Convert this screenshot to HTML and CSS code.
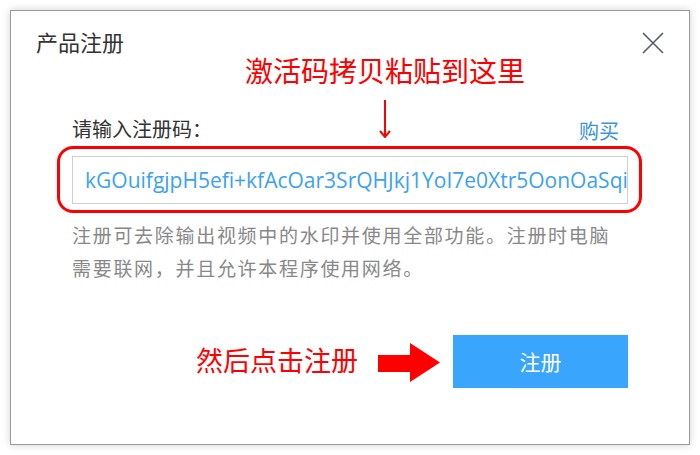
FILE: index.html
```html
<!DOCTYPE html>
<html lang="zh-CN">
<head>
  <meta charset="UTF-8">
  <title>产品注册</title>
  <link rel="stylesheet" href="styles.css">
</head>
<body>
  <div class="dialog">
    <div class="dialog-head">
      <div class="dialog-title">产品注册</div>
      <svg class="close" width="22" height="22" viewBox="0 0 22 22">
        <path d="M1 1 L21 21 M21 1 L1 21" stroke="#555b66" stroke-width="1.6" fill="none"/>
      </svg>
    </div>

    <div class="form">
      <div class="label-row">
        <span class="label">请输入注册码：</span>
        <a class="buy">购买</a>
      </div>
      <div class="code-input">kGOuifgjpH5efi+kfAcOar3SrQHJkj1YoI7e0Xtr5OonOaSqi</div>
      <p class="desc">注册可去除输出视频中的水印并使用全部功能。注册时电脑需要联网，并且允许本程序使用网络。</p>
      <div class="foot">
        <div class="btn">注册</div>
      </div>
    </div>

    <!-- 红色标注 -->
    <div class="note note-top">激活码拷贝粘贴到这里</div>
    <svg class="arrow-down" width="12" height="38" viewBox="0 0 12 38">
      <path d="M6 0 V37 M1 31 L6 37 L11 31" stroke="#ff0000" stroke-width="2" fill="none"/>
    </svg>
    <div class="red-frame"></div>
    <div class="note note-bottom">然后点击注册</div>
    <svg class="arrow-right" width="62" height="39" viewBox="0 0 62 39">
      <path d="M0 12 H32 V0 L62 19.5 L32 39 V29 H0 Z" fill="#ff0000"/>
    </svg>
  </div>
</body>
</html>
```

FILE: styles.css
```css
html, body {
  margin: 0;
  padding: 0;
  background: #fff;
  font-family: "Noto Sans CJK SC", "Noto Sans", sans-serif;
}
body {
  padding: 10px;
}
.dialog {
  position: relative;
  width: 678px;
  height: 433px;
  border: 1px solid #9a9a9a;
  background: #fff;
  box-shadow: 0 0 8px rgba(0,0,0,0.18);
}
.dialog-head {
  display: flex;
  justify-content: space-between;
  align-items: flex-start;
  padding: 15px 25px 0 25px;
}
.dialog-title {
  font-size: 22px;
  line-height: 30px;
  color: #333;
}
.close {
  margin-top: 6px;
}
.form {
  padding: 0 61px;
  margin-top: 57px;
}
.label-row {
  display: flex;
  justify-content: space-between;
  align-items: center;
  line-height: 28px;
}
.label {
  font-size: 20px;
  color: #333;
}
.buy {
  font-size: 20px;
  color: #3a93dc;
  margin-right: 9px;
  margin-top: 4px;
}
.code-input {
  margin-top: 11px;
  height: 46px;
  line-height: 46px;
  border: 1px solid #cfcfcf;
  padding: 0 12px;
  font-family: "Open Sans", sans-serif;
  font-size: 21px;
  color: #3aa2f5;
  white-space: nowrap;
  overflow: hidden;
}
.desc {
  margin: 14px 0 0 0;
  font-size: 19px;
  line-height: 33px;
  letter-spacing: 1.7px;
  color: #888;
}
.foot {
  display: flex;
  justify-content: flex-end;
  margin-top: 51px;
}
.btn {
  width: 175px;
  height: 53px;
  line-height: 53px;
  background: #39a5fd;
  color: #fff;
  font-size: 21px;
  text-align: center;
}

/* 标注层 */
.note {
  position: absolute;
  color: #ff0000;
  line-height: 1;
  white-space: nowrap;
}
.note-top {
  left: 234px;
  top: 45px;
  font-size: 28px;
}
.note-bottom {
  left: 185px;
  top: 335px;
  font-size: 27px;
}
.arrow-down {
  position: absolute;
  left: 368px;
  top: 89px;
}
.arrow-right {
  position: absolute;
  left: 367px;
  top: 332px;
}
.red-frame {
  position: absolute;
  left: 46px;
  top: 135px;
  width: 579px;
  height: 61px;
  border: 3px solid #ff0000;
  border-radius: 16px;
}
```
